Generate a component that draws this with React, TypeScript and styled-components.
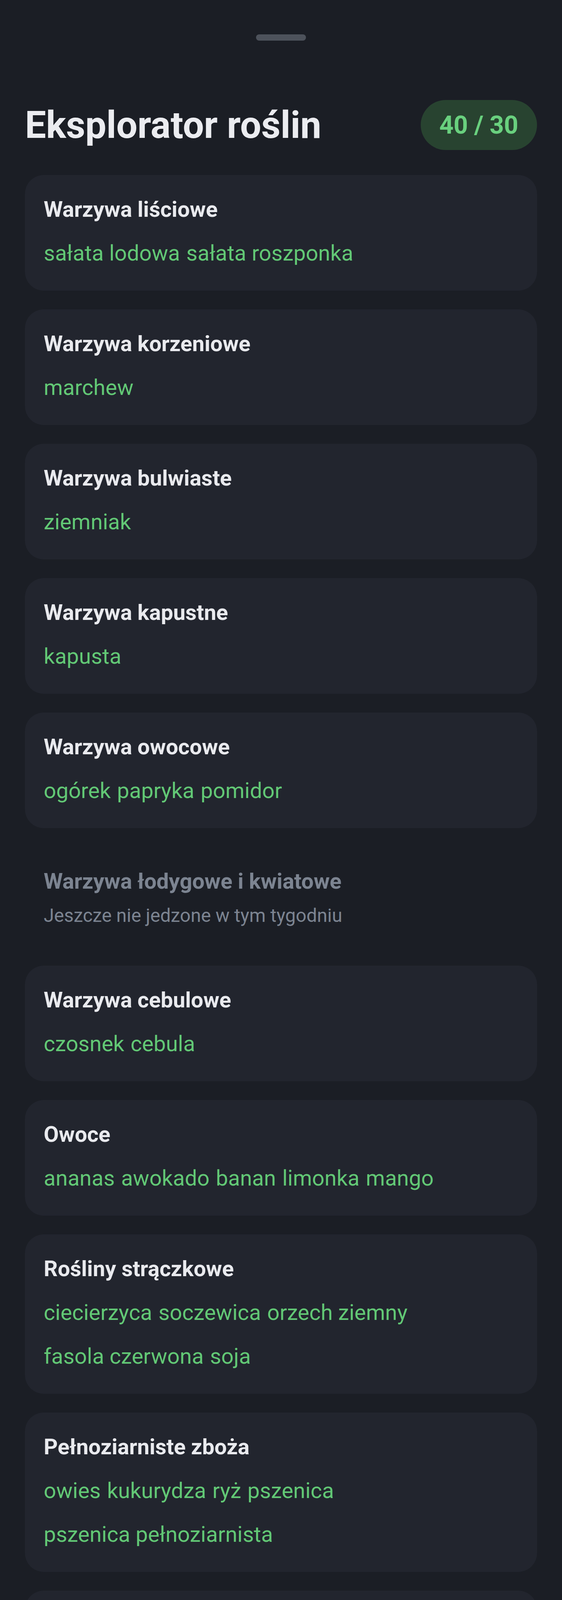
import React from "react";
import styled, { createGlobalStyle } from "styled-components";

const S = 4;
const u = (n: number) => `${n * S}px`;

const Global = createGlobalStyle`
  html, body {
    margin: 0;
    padding: 0;
    background: #1b1e25;
  }
  body {
    font-family: Roboto, "Noto Sans", "Liberation Sans", sans-serif;
    -webkit-font-smoothing: antialiased;
  }
  * { box-sizing: border-box; }
`;

const Sheet = styled.div`
  width: 100%;
  background: #1b1e25;
  padding: 0 ${u(16)} ${u(16)};
  display: flex;
  flex-direction: column;
`;

const Handle = styled.div`
  width: ${u(32)};
  height: ${u(4)};
  border-radius: ${u(2)};
  background: #4d525b;
  margin: ${u(22)} auto 0;
`;

const Header = styled.header`
  display: flex;
  align-items: center;
  justify-content: space-between;
  height: ${u(32)};
  margin-top: ${u(38)};
`;

const Title = styled.h1`
  margin: 0;
  font-size: ${u(24)};
  line-height: ${u(32)};
  font-weight: 700;
  color: #ebecf0;
`;

const Badge = styled.div`
  height: ${u(32)};
  padding: 0 ${u(12)};
  border-radius: ${u(16)};
  background: #284330;
  color: #69d07e;
  font-size: ${u(16)};
  font-weight: 700;
  display: flex;
  align-items: center;
  white-space: nowrap;
`;

const List = styled.div`
  display: flex;
  flex-direction: column;
  gap: ${u(12)};
  margin-top: ${u(16)};
`;

const Card = styled.section<{ $empty?: boolean }>`
  background: ${(p) => (p.$empty ? "transparent" : "#22252e")};
  border-radius: ${u(12)};
  padding: ${u(12)};
  display: flex;
  flex-direction: column;
`;

const CardTitle = styled.h2<{ $empty?: boolean }>`
  margin: 0;
  font-size: ${u(14)};
  line-height: ${u(20)};
  font-weight: 700;
  color: ${(p) => (p.$empty ? "#7c8491" : "#e9eaee")};
`;

const Items = styled.div`
  display: flex;
  flex-wrap: wrap;
  column-gap: ${u(4)};
  row-gap: ${u(4)};
  margin-top: ${u(6)};
`;

const Item = styled.span`
  font-size: ${u(14)};
  line-height: ${u(24)};
  color: #62c875;
  white-space: nowrap;
`;

const Empty = styled.p`
  margin: ${u(4)} 0 0;
  font-size: ${u(12)};
  line-height: ${u(16)};
  color: #7c8491;
`;

type Group = { name: string; items: string[] };

const groups: Group[] = [
  { name: "Warzywa liściowe", items: ["sałata lodowa", "sałata roszponka"] },
  { name: "Warzywa korzeniowe", items: ["marchew"] },
  { name: "Warzywa bulwiaste", items: ["ziemniak"] },
  { name: "Warzywa kapustne", items: ["kapusta"] },
  { name: "Warzywa owocowe", items: ["ogórek", "papryka", "pomidor"] },
  { name: "Warzywa łodygowe i kwiatowe", items: [] },
  { name: "Warzywa cebulowe", items: ["czosnek", "cebula"] },
  { name: "Owoce", items: ["ananas", "awokado", "banan", "limonka", "mango"] },
  {
    name: "Rośliny strączkowe",
    items: ["ciecierzyca", "soczewica", "orzech ziemny", "fasola czerwona", "soja"],
  },
  {
    name: "Pełnoziarniste zboża",
    items: ["owies", "kukurydza", "ryż", "pszenica", "pszenica pełnoziarnista"],
  },
  { name: "Pseudozboża", items: ["komosa ryżowa"] },
  {
    name: "Orzechy",
    items: ["nerkowiec", "orzech laskowy", "orzech pekan", "orzech włoski"],
  },
  { name: "Nasiona", items: ["nasiona konopii", "siemię lniane"] },
  {
    name: "Zioła i przyprawy",
    items: ["kakao", "kmin rzymski", "kolendra", "nasiona kolendry", "kurkuma"],
  },
  { name: "Grzyby i wodorosty", items: ["Chlorella", "Spirulina"] },
  { name: "Inne / Nieznane", items: [] },
];

export default function App() {
  return (
    <>
      <Global />
      <Sheet>
        <Handle />
        <Header>
          <Title>Eksplorator roślin</Title>
          <Badge>40 / 30</Badge>
        </Header>
        <List>
          {groups.map((g) => {
            const empty = g.items.length === 0;
            return (
              <Card key={g.name} $empty={empty}>
                <CardTitle $empty={empty}>{g.name}</CardTitle>
                {empty ? (
                  <Empty>Jeszcze nie jedzone w tym tygodniu</Empty>
                ) : (
                  <Items>
                    {g.items.map((it) => (
                      <Item key={it}>{it}</Item>
                    ))}
                  </Items>
                )}
              </Card>
            );
          })}
        </List>
      </Sheet>
    </>
  );
}
